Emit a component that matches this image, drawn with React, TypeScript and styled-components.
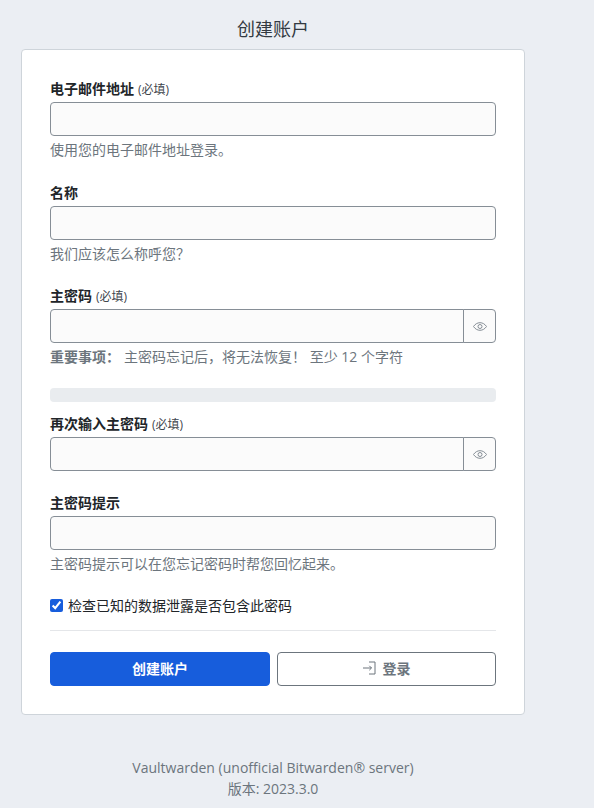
import React from 'react'
import styled, { createGlobalStyle } from 'styled-components'

const GlobalStyle = createGlobalStyle`
  html, body {
    margin: 0;
    padding: 0;
    background: #ebeef3;
  }
  body {
    font-family: "Open Sans", "Noto Sans CJK SC", sans-serif;
    font-size: 14px;
    color: #212529;
  }
`

const Page = styled.div`
  width: 504px;
  margin-left: 21px;
  padding-top: 17px;
`

const Title = styled.h1`
  margin: 0 0 7px;
  height: 25px;
  line-height: 25px;
  font-size: 18px;
  font-weight: 400;
  text-align: center;
  color: #333a42;
`

const Card = styled.form`
  box-sizing: border-box;
  height: 666px;
  padding: 28px 28px 0;
  background: #fff;
  border: 1px solid #ced4da;
  border-radius: 4px;
`

const Field = styled.div<{ $gap?: number }>`
  margin-bottom: ${(p) => p.$gap ?? 20.5}px;
`

const Label = styled.label`
  display: block;
  height: 21px;
  line-height: 21px;
  margin-bottom: 3px;
  font-weight: 700;
  color: #212529;
`

const Required = styled.small`
  font-size: 12px;
  font-weight: 400;
  color: #3f464d;
  margin-left: 4px;
`

const Input = styled.input<{ $joined?: boolean }>`
  box-sizing: border-box;
  display: block;
  flex: 1;
  width: 100%;
  min-width: 0;
  height: 34px;
  padding: 6px 12px;
  background: #fbfbfb;
  border: 1px solid #868e96;
  border-radius: ${(p) => (p.$joined ? '4px 0 0 4px' : '4px')};
  outline: none;
`

const InputRow = styled.div`
  display: flex;
`

const EyeButton = styled.button`
  box-sizing: border-box;
  display: flex;
  align-items: center;
  justify-content: center;
  flex: none;
  width: 33px;
  height: 34px;
  margin-left: -1px;
  padding: 0;
  background: #fbfbfb;
  border: 1px solid #868e96;
  border-radius: 0 4px 4px 0;
  color: #868e96;
`

const Hint = styled.div`
  height: 22px;
  line-height: 21px;
  margin-top: 3px;
  color: #6c757d;
  font-size: 14px;
`

const HintStrong = styled.strong`
  font-weight: 700;
  margin-right: 4px;
`

const Meter = styled.div`
  height: 14px;
  margin: 20px 0 11px;
  background: #e9ecef;
  border-radius: 4px;
`

const CheckRow = styled.label`
  display: flex;
  align-items: center;
  gap: 5px;
  height: 21px;
  line-height: 21px;
  margin-top: 19.5px;
  color: #212529;
  font-size: 14px;
`

const Check = styled.input`
  width: 13px;
  height: 13px;
  margin: 0;
  accent-color: #175ddc;
`

const Divider = styled.hr`
  height: 1px;
  margin: 14px 0 21px;
  border: 0;
  background: #e4e6e9;
`

const Actions = styled.div`
  display: grid;
  grid-template-columns: 220px 219px;
  gap: 7px;
`

const Button = styled.button<{ $primary?: boolean }>`
  box-sizing: border-box;
  display: flex;
  align-items: center;
  justify-content: center;
  gap: 7px;
  height: 34px;
  padding: 0 0 1px;
  font: inherit;
  font-size: 14px;
  font-weight: 700;
  border-radius: 4px;
  color: ${(p) => (p.$primary ? '#fff' : '#6c757d')};
  background: ${(p) => (p.$primary ? '#175ddc' : '#fff')};
  border: 1px solid ${(p) => (p.$primary ? '#175ddc' : '#6c757d')};
`

const Footer = styled.footer`
  width: 504px;
  margin-top: 42px;
  text-align: center;
  line-height: 21px;
  font-size: 14px;
  color: #6c757d;
`

const EyeIcon = () => (
  <svg width="14" height="9" viewBox="0 0 14 9" fill="none" stroke="currentColor" strokeWidth="1">
    <path d="M.5 4.500C2.200 2 4.400.7 7 .7s4.800 1.300 6.500 3.800C11.800 7 9.600 8.300 7 8.300S2.200 7 .5 4.500z" />
    <circle cx="7" cy="4.500" r="2" />
  </svg>
)

const LoginIcon = () => (
  <svg width="13" height="14" viewBox="0 0 13 14" fill="none" stroke="currentColor" strokeWidth="1">
    <path d="M0 7h8.500M6.300 4.800 8.500 7l-2.200 2.200" />
    <path d="M6 1h6v12H6" />
  </svg>
)

const App: React.FC = () => {
  return (
    <Page>
      <GlobalStyle />
      <Title>创建账户</Title>
      <Card>
        <Field>
          <Label>电子邮件地址<Required>(必填)</Required></Label>
          <Input type="text" />
          <Hint>使用您的电子邮件地址登录。</Hint>
        </Field>
        <Field>
          <Label>名称</Label>
          <Input type="text" />
          <Hint>我们应该怎么称呼您？</Hint>
        </Field>
        <Field $gap={0}>
          <Label>主密码<Required>(必填)</Required></Label>
          <InputRow>
            <Input type="password" $joined />
            <EyeButton type="button"><EyeIcon /></EyeButton>
          </InputRow>
          <Hint>
            <HintStrong>重要事项：</HintStrong>
            主密码忘记后，将无法恢复！ 至少 12 个字符
          </Hint>
        </Field>
        <Meter />
        <Field $gap={21}>
          <Label>再次输入主密码<Required>(必填)</Required></Label>
          <InputRow>
            <Input type="password" $joined />
            <EyeButton type="button"><EyeIcon /></EyeButton>
          </InputRow>
        </Field>
        <Field $gap={0}>
          <Label>主密码提示</Label>
          <Input type="text" />
          <Hint>主密码提示可以在您忘记密码时帮您回忆起来。</Hint>
        </Field>
        <CheckRow>
          <Check type="checkbox" defaultChecked />
          检查已知的数据泄露是否包含此密码
        </CheckRow>
        <Divider />
        <Actions>
          <Button type="button" $primary>创建账户</Button>
          <Button type="button"><LoginIcon />登录</Button>
        </Actions>
      </Card>
      <Footer>
        Vaultwarden (unofficial Bitwarden® server)
        <br />
        版本: 2023.3.0
      </Footer>
    </Page>
  )
}

export default App
